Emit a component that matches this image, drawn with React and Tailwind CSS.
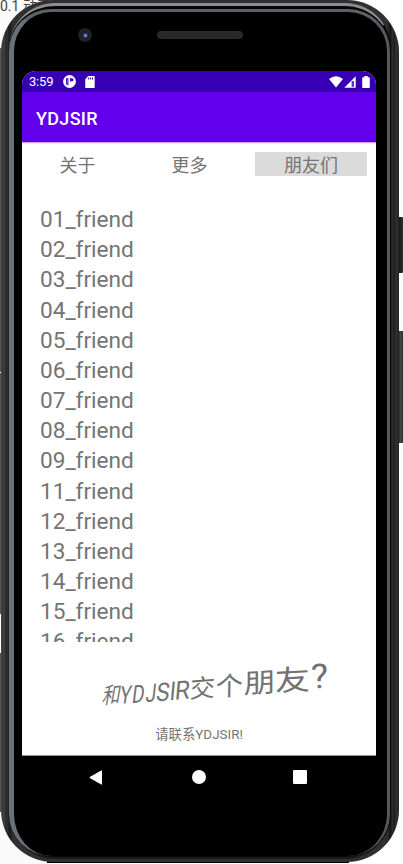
import React from "react";

const tabs = ["关于", "更多", "朋友们"];
const friends = ["01", "02", "03", "04", "05", "06", "07", "08", "09", "11", "12", "13", "14", "15", "16"];

// Each glyph of the slogan: character, x, baseline y, x scale, y scale, slant
const slogan = [
  ["和", 101.5, 703, 0.83, 1.02, -0.18],
  ["Y", 119, 703, 0.86, 1.12, -0.15],
  ["D", 131.3, 702.2, 0.86, 1.13, -0.14],
  ["J", 145, 701.2, 0.86, 1.14, -0.13],
  ["S", 155.4, 700.4, 1.02, 1.16, -0.12],
  ["I", 168.9, 699.3, 1, 1.17, -0.11],
  ["R", 174.2, 698.8, 1.1, 1.18, -0.1],
  ["交", 189.5, 697, 1.14, 1.12, -0.06],
  ["个", 215.5, 695.3, 1.24, 1.18, -0.02],
  ["朋", 243.7, 692.6, 1.43, 1.24, 0],
  ["友", 275, 690.3, 1.6, 1.3, 0.03],
  ["?", 311.3, 687.5, 1.65, 1.55, 0.04],
];

function StatusBar() {
  return (
    <div className="flex h-[21px] shrink-0 items-center bg-[#3700b3] pr-[6px] pl-[7px] text-white">
      <span className="w-[34px] text-[13px] leading-[21px] tracking-[-0.2px]">3:59</span>
      <svg className="h-[13px] w-[13px]" viewBox="0 0 13 13">
        <circle cx="6.5" cy="6.5" r="6.4" fill="white" />
        <path d="M3 3.2h2.4v7H4.6Q3 10 3 8zM7.1 3h1v3.4h-1z" fill="#3700b3" />
        <circle cx="9" cy="4.8" r="1.5" fill="#3700b3" />
        <path d="M3.8 4.2h.8v5h-.8z" fill="#9c80dc" />
      </svg>
      <svg className="ml-[9px] h-[12px] w-[10px]" viewBox="0 0 10 12">
        <path d="M3.3 0H9q.7 0 .7.7v10.5q0 .8-.8.8H1q-.8 0-.8-.8V3.2z" fill="white" />
        <path d="M3.2 1.6h1v2h-1zM5.1 1.6h1v2h-1zM7 1.6h1v2H7z" fill="#3700b3" />
      </svg>
      <svg className="ml-auto h-[12px] w-[14px]" viewBox="0 0 14 12">
        <path d="M0 3Q7-2.5 14 3L7 11.6z" fill="white" />
      </svg>
      <svg className="ml-[1px] h-[12px] w-[12px]" viewBox="0 0 12 12">
        <path d="M.3 11.7 11.7.3v11.4z" fill="white" />
        <path d="M7.7 4.9h2.2v5.9H7.7z" fill="#3700b3" />
        <path d="M8.5 4.9h.7v5.9h-.7z" fill="#8c6bd4" />
      </svg>
      <svg className="ml-[6px] h-[12px] w-[8px]" viewBox="0 0 8 12">
        <path d="M2.3 0h3.4v1.2H7q.8 0 .8.8v9.2q0 .8-.8.8H1q-.8 0-.8-.8V2q0-.8.8-.8h1.3z" fill="white" />
      </svg>
    </div>
  );
}

function Slogan() {
  return (
    <svg className="h-[70px] w-full shrink-0" viewBox="22 641 354 70" fill="#727272" fontSize="22">
      {slogan.map(([ch, x, y, sx, sy, slant]) => (
        <text key={ch} transform={`matrix(${sx} -0.09 ${slant} ${sy} ${x} ${y})`}>
          {ch}
        </text>
      ))}
    </svg>
  );
}

function Screen() {
  return (
    <div className="flex h-[685px] w-[354px] flex-col overflow-hidden rounded-t-[14px] bg-white">
      <StatusBar />
      <div className="z-10 flex h-[50px] shrink-0 items-center bg-[#6200ee] px-[14px] pt-[2px] text-[18px] font-medium tracking-[0.3px] text-white shadow-[0_1px_1px_rgba(98,0,238,0.35)]">
        YDJSIR
      </div>
      <div className="mt-[10px] flex h-[24px] shrink-0 text-[18px] leading-[28px] text-[#747474]">
        {tabs.map((tab, i) => (
          <div key={tab} className={i === 2 ? "ml-[9px] h-[24px] w-[112px] bg-[#dbdbdb] text-center" : "w-[112px] pr-[1px] text-center"}>
            {tab}
          </div>
        ))}
      </div>
      <div className="mt-[29px] h-[437px] shrink-0 overflow-hidden pl-[18px] text-[22.6px] leading-[30.17px] text-[#747474]">
        {friends.map((n) => (
          <div key={n}>{n}_friend</div>
        ))}
      </div>
      <Slogan />
      <div className="mt-[13px] shrink-0 text-center text-[13.4px] leading-[20px] text-[#747474]">请联系YDJSIR!</div>
      <div className="mt-auto h-px bg-[#8c9392]" />
    </div>
  );
}

function NavBar() {
  return (
    <div className="flex h-[42px] w-[354px] items-center">
      <svg className="ml-[67px] h-[15px] w-[13px]" viewBox="0 0 13 15">
        <path d="M.8 7.5 12.5.8v13.4z" fill="white" stroke="white" strokeLinejoin="round" />
      </svg>
      <div className="ml-[90px] h-[14px] w-[14px] rounded-full bg-white" />
      <div className="ml-[87px] h-[14px] w-[14px] rounded-[1px] bg-white" />
    </div>
  );
}

export default function App() {
  return (
    <div className="relative h-[864px] w-[403px] overflow-hidden bg-white font-[Roboto,'Noto_Sans_CJK_SC',sans-serif]">
      <div className="absolute top-0 left-0 h-[864px] w-[47px] bg-[#fafafa]" />
      <div className="absolute top-[48px] left-0 h-[764px] w-px bg-[linear-gradient(#555_0_324px,#fff_324px_325px,#555_325px_566px,#fff_566px_605px,#555_605px)]" />
      <div className="absolute -top-[4px] left-0 text-[14px] leading-[20px] whitespace-nowrap text-[#444]">0.1 动画</div>
      <div className="absolute top-0 left-[130px] h-[4px] w-[81px] bg-[#666]" />
      <div className="absolute top-[217px] left-[398px] h-[56px] w-[5px] rounded-r-[1px] bg-[linear-gradient(90deg,#111,#303030)]" />
      <div className="absolute top-[331px] left-[398px] h-[112px] w-[5px] bg-[linear-gradient(90deg,#1b1b1b,#4b4b4b_60%,#222)]" />
      <div className="absolute top-[861px] left-[47px] h-[2px] w-[302px] bg-black" />

      {/* Phone shell: nested metal rims around the glass */}
      <div className="relative ml-px h-[862px] w-[398px] rounded-[52px] bg-[linear-gradient(90deg,#484848_0,#343434_2px,#454545_3px,#272727_5px,#303030_7px,#171717_8px,#303030_12px,#303030_386px,#111_390px,#323232_391px,#1d1d1d_393px,#303030_395px,#242424_398px)] pt-[3px] pr-[8px] pb-[3px] pl-[8px]">
        <div className="h-[856px] w-[382px] rounded-[46px] border-t-[3px] border-r-[1px] border-b-[2px] border-l-0 border-t-[#8a8e8e] border-r-[#090909] border-b-[#191919] bg-[#050505] pt-[3px]">
          <div className="h-[847px] w-[381px] rounded-[42px] border-t-[3px] border-r-[3px] border-l-[5px] border-t-[#606167] border-r-[#55585d] border-l-[#69707a] bg-black">
            <div className="flex h-[59px] items-center pb-[13px] pl-[64px]">
              <div className="flex h-[14px] w-[14px] items-center justify-center rounded-full bg-[#202124]">
                <div className="h-[7px] w-[7px] rounded-full bg-[radial-gradient(circle,#7188bd_0_1px,#283269_2px,#101632_4px)]" />
              </div>
              <div className="ml-[65px] h-[8px] w-[86px] rounded-full bg-[#222424] bg-[radial-gradient(#303232_0.6px,transparent_0.8px)] bg-[size:2px_2px]" />
            </div>
            <div className="pl-[8px]">
              <Screen />
              <NavBar />
            </div>
          </div>
        </div>
      </div>
    </div>
  );
}
